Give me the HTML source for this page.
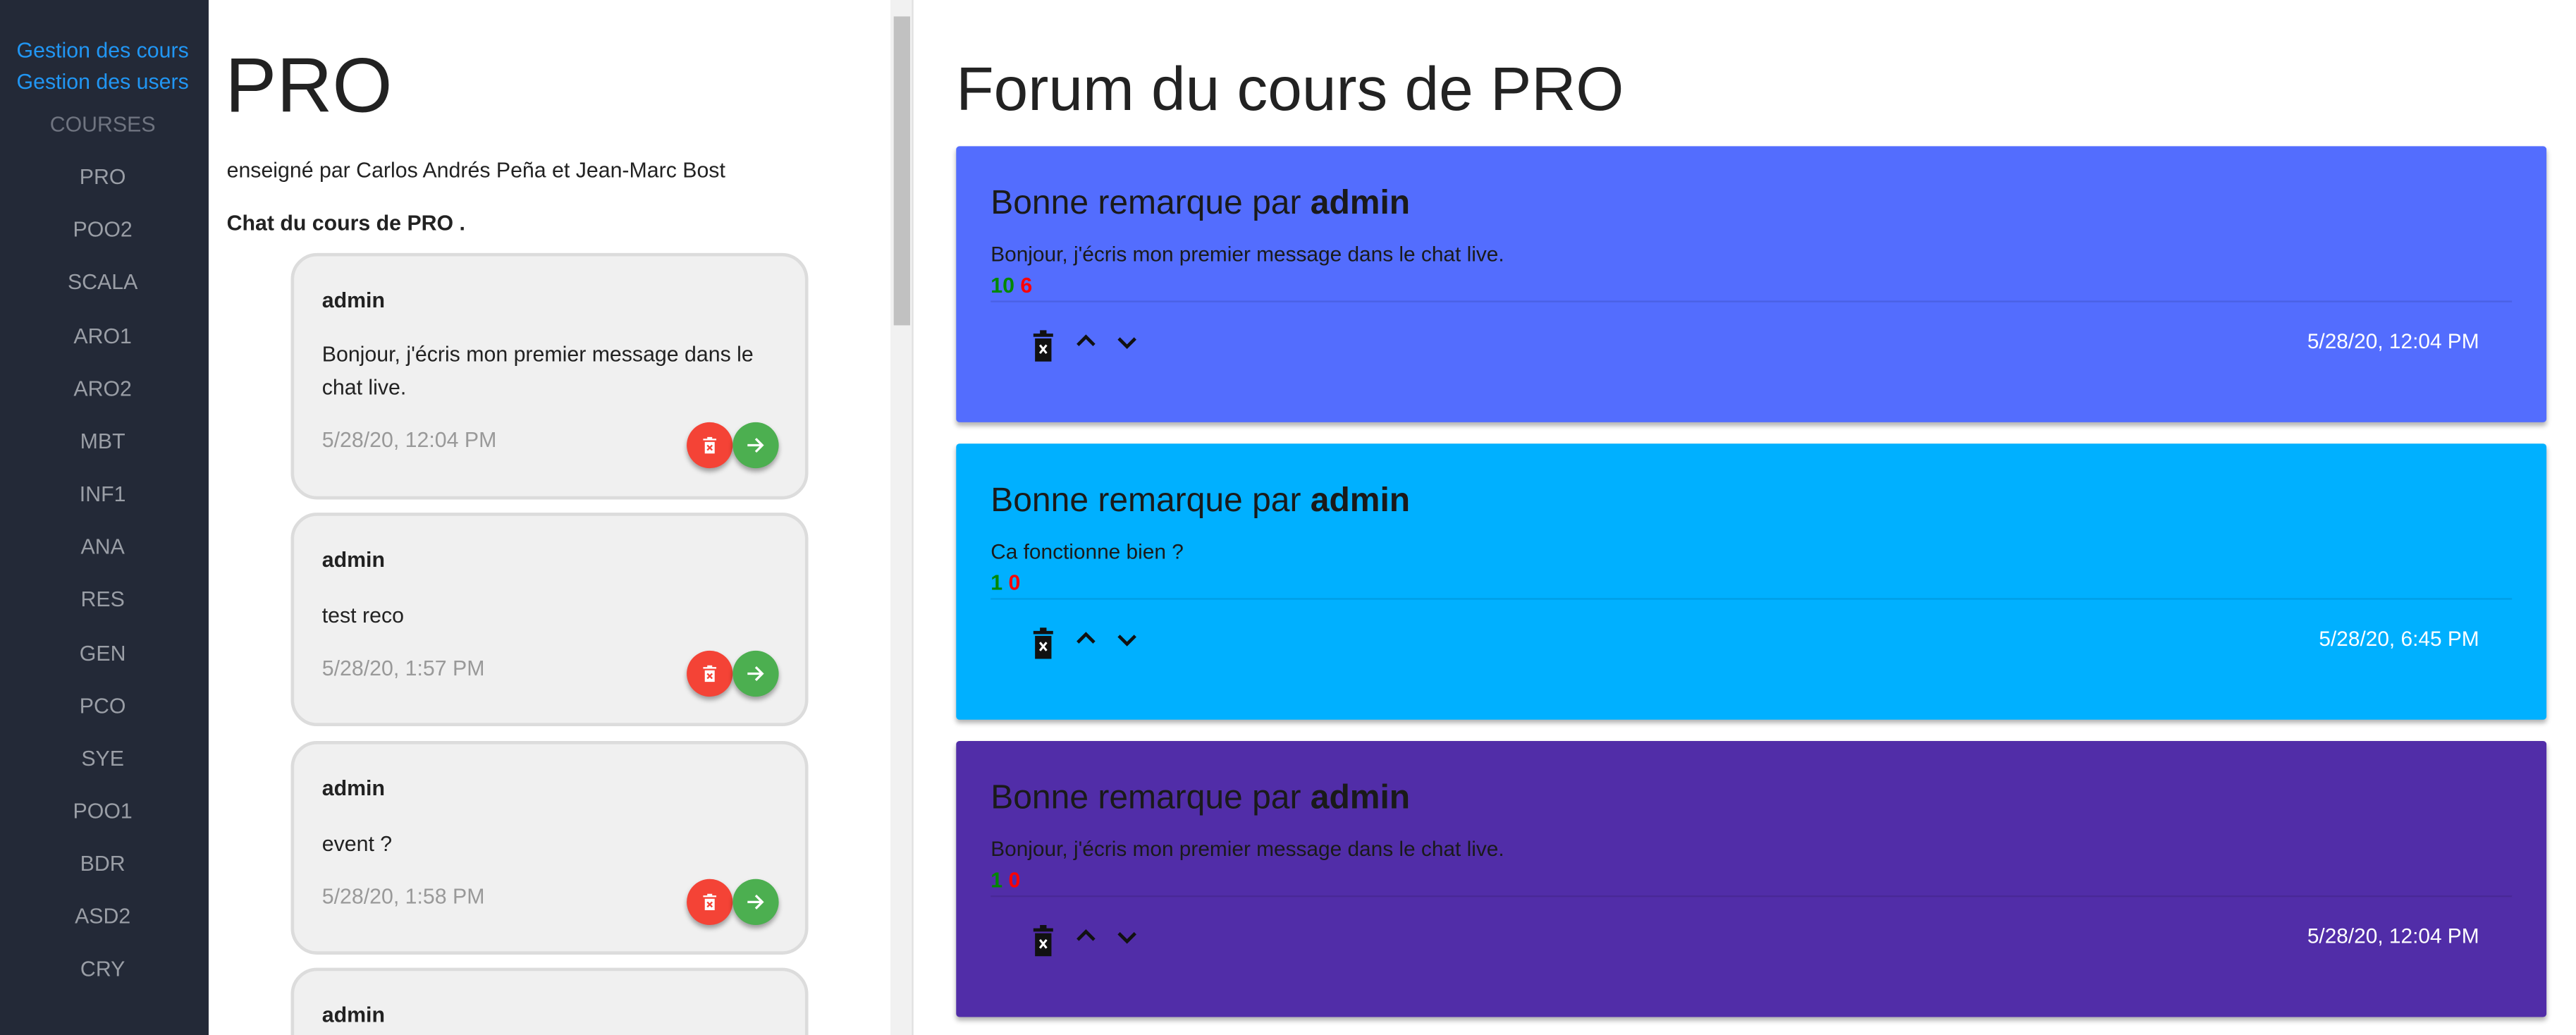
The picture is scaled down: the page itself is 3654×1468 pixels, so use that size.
<!DOCTYPE html>
<html><head><meta charset="utf-8"><style>
html,body{margin:0;padding:0;width:3654px;height:1468px;overflow:hidden;background:#fff;}
#w{width:1568px;height:630px;overflow:hidden;transform:scale(2.3304);transform-origin:0 0;position:relative;font-family:"Liberation Sans",sans-serif;}
.a{position:absolute;white-space:nowrap;}
#sb{position:absolute;left:0;top:0;width:127px;height:630px;background:#232937;}
.sl{position:absolute;left:0;width:125px;text-align:center;font-size:13px;color:#9a9ea6;}
.lk{color:#2196f3;}
.cc{position:absolute;left:177px;width:311px;background:#f0f0f0;border:2px solid #dcdcdc;border-radius:16px;}
.cc .u{position:absolute;left:17px;top:19px;font-weight:bold;font-size:13px;color:#222;}
.cc .t{position:absolute;left:17px;font-size:13px;line-height:19.5px;color:#222;width:275px;}
.cc .d{position:absolute;left:17px;font-size:13px;color:#999;}
.btn{position:absolute;width:28px;height:28px;border-radius:50%;box-shadow:0 2px 3px rgba(0,0,0,.35);}
.btn svg{position:absolute;left:7px;top:7px;}
.card{position:absolute;left:582px;width:968px;height:168px;border-radius:2px;box-shadow:0 2px 3px rgba(0,0,0,.3);}
.card .h{position:absolute;left:21px;top:23px;font-size:20.6px;color:#1a1a1a;}
.card .b{position:absolute;left:21px;top:58px;font-size:12.8px;color:#1a1a1a;}
.card .v{position:absolute;left:21px;top:77px;font-size:13px;font-weight:bold;}
.card .hr{position:absolute;left:21px;right:21px;top:94px;height:1px;background:rgba(0,0,0,.1);}
.card .dt{position:absolute;right:41px;top:111px;font-size:12.8px;color:#fff;}
.card svg{position:absolute;left:44px;top:110px;}
</style></head><body><div id="w">
<div id="sb">
<div class="sl lk" style="top:23px">Gestion des cours</div>
<div class="sl lk" style="top:42px">Gestion des users</div>
<div class="sl" style="top:68px;color:#6f7480">COURSES</div>
<div class="sl" style="top:100px">PRO</div>
<div class="sl" style="top:132px">POO2</div>
<div class="sl" style="top:164px">SCALA</div>
<div class="sl" style="top:197px">ARO1</div>
<div class="sl" style="top:229px">ARO2</div>
<div class="sl" style="top:261px">MBT</div>
<div class="sl" style="top:293px">INF1</div>
<div class="sl" style="top:325px">ANA</div>
<div class="sl" style="top:357px">RES</div>
<div class="sl" style="top:390px">GEN</div>
<div class="sl" style="top:422px">PCO</div>
<div class="sl" style="top:454px">SYE</div>
<div class="sl" style="top:486px">POO1</div>
<div class="sl" style="top:518px">BDR</div>
<div class="sl" style="top:550px">ASD2</div>
<div class="sl" style="top:582px">CRY</div>
</div>
<div class="a" style="left:137px;top:24px;font-size:47px;color:#222">PRO</div>
<div class="a" style="left:138px;top:96px;font-size:13px;color:#222">enseigné par Carlos Andrés Peña et Jean-Marc Bost</div>
<div class="a" style="left:138px;top:128px;font-size:13px;font-weight:bold;color:#222">Chat du cours de PRO .</div>

<div class="cc" style="top:154px;height:146px"><div class="u">admin</div><div class="t" style="top:50px">Bonjour, j'écris mon premier message dans le chat live.</div><div class="d" style="top:104px">5/28/20, 12:04 PM</div>
<div class="btn" style="left:239px;top:101px;background:#f44336"><svg width="14" height="14" viewBox="0 0 14 14"><path d="M3 3h8v1H3zM5.5 2h3v1h-3zM4 5h6v7H4z" fill="#fff"/><path d="M5.5 7l3 3M8.5 7l-3 3" stroke="#f44336" stroke-width="1"/></svg></div><div class="btn" style="left:267px;top:101px;background:#4caf50"><svg width="14" height="14" viewBox="0 0 14 14"><path d="M2 7h9M7 3l4 4-4 4" stroke="#fff" stroke-width="1.4" fill="none"/></svg></div></div>
<div class="cc" style="top:312px;height:126px"><div class="u">admin</div><div class="t" style="top:51px">test reco</div><div class="d" style="top:85px">5/28/20, 1:57 PM</div>
<div class="btn" style="left:239px;top:82px;background:#f44336"><svg width="14" height="14" viewBox="0 0 14 14"><path d="M3 3h8v1H3zM5.5 2h3v1h-3zM4 5h6v7H4z" fill="#fff"/><path d="M5.5 7l3 3M8.5 7l-3 3" stroke="#f44336" stroke-width="1"/></svg></div><div class="btn" style="left:267px;top:82px;background:#4caf50"><svg width="14" height="14" viewBox="0 0 14 14"><path d="M2 7h9M7 3l4 4-4 4" stroke="#fff" stroke-width="1.4" fill="none"/></svg></div></div>
<div class="cc" style="top:451px;height:126px"><div class="u">admin</div><div class="t" style="top:51px">event ?</div><div class="d" style="top:85px">5/28/20, 1:58 PM</div>
<div class="btn" style="left:239px;top:82px;background:#f44336"><svg width="14" height="14" viewBox="0 0 14 14"><path d="M3 3h8v1H3zM5.5 2h3v1h-3zM4 5h6v7H4z" fill="#fff"/><path d="M5.5 7l3 3M8.5 7l-3 3" stroke="#f44336" stroke-width="1"/></svg></div><div class="btn" style="left:267px;top:82px;background:#4caf50"><svg width="14" height="14" viewBox="0 0 14 14"><path d="M2 7h9M7 3l4 4-4 4" stroke="#fff" stroke-width="1.4" fill="none"/></svg></div></div>
<div class="cc" style="top:589px;height:80px"><div class="u">admin</div></div>

<div class="a" style="left:542px;top:0;width:13px;height:630px;background:#f1f1f1"></div>
<div class="a" style="left:544px;top:10px;width:10px;height:188px;background:#c1c1c1"></div>
<div class="a" style="left:555px;top:0;width:1px;height:630px;background:#e0e0e0"></div>

<div class="a" style="left:582px;top:33px;font-size:37.5px;color:#222">Forum du cours de PRO</div>

<div class="card" style="top:89px;background:#536dfe"><div class="h">Bonne remarque par <b>admin</b></div><div class="b">Bonjour, j'écris mon premier message dans le chat live.</div><div class="v"><span style="color:#080">10</span> <span style="color:#f00">6</span></div><div class="hr"></div>
<svg width="70" height="22" viewBox="0 0 70 22"><path d="M3 4h12v2H3zM7 2h4v2H7zM4 7h10v14H4z" fill="#111"/><path d="M7 11l4 5M11 11l-4 5" stroke="#fff" stroke-width="1.3"/><path d="M30 11l5-5 5 5M55 7l5 5 5-5" stroke="#111" stroke-width="2" fill="none"/></svg>
<div class="dt">5/28/20, 12:04 PM</div></div>
<div class="card" style="top:270px;background:#00b0ff"><div class="h">Bonne remarque par <b>admin</b></div><div class="b">Ca fonctionne bien ?</div><div class="v"><span style="color:#080">1</span> <span style="color:#f00">0</span></div><div class="hr"></div>
<svg width="70" height="22" viewBox="0 0 70 22"><path d="M3 4h12v2H3zM7 2h4v2H7zM4 7h10v14H4z" fill="#111"/><path d="M7 11l4 5M11 11l-4 5" stroke="#fff" stroke-width="1.3"/><path d="M30 11l5-5 5 5M55 7l5 5 5-5" stroke="#111" stroke-width="2" fill="none"/></svg>
<div class="dt">5/28/20, 6:45 PM</div></div>
<div class="card" style="top:451px;background:#512da8"><div class="h">Bonne remarque par <b>admin</b></div><div class="b">Bonjour, j'écris mon premier message dans le chat live.</div><div class="v"><span style="color:#080">1</span> <span style="color:#f00">0</span></div><div class="hr"></div>
<svg width="70" height="22" viewBox="0 0 70 22"><path d="M3 4h12v2H3zM7 2h4v2H7zM4 7h10v14H4z" fill="#111"/><path d="M7 11l4 5M11 11l-4 5" stroke="#fff" stroke-width="1.3"/><path d="M30 11l5-5 5 5M55 7l5 5 5-5" stroke="#111" stroke-width="2" fill="none"/></svg>
<div class="dt">5/28/20, 12:04 PM</div></div>
</div></body></html>
